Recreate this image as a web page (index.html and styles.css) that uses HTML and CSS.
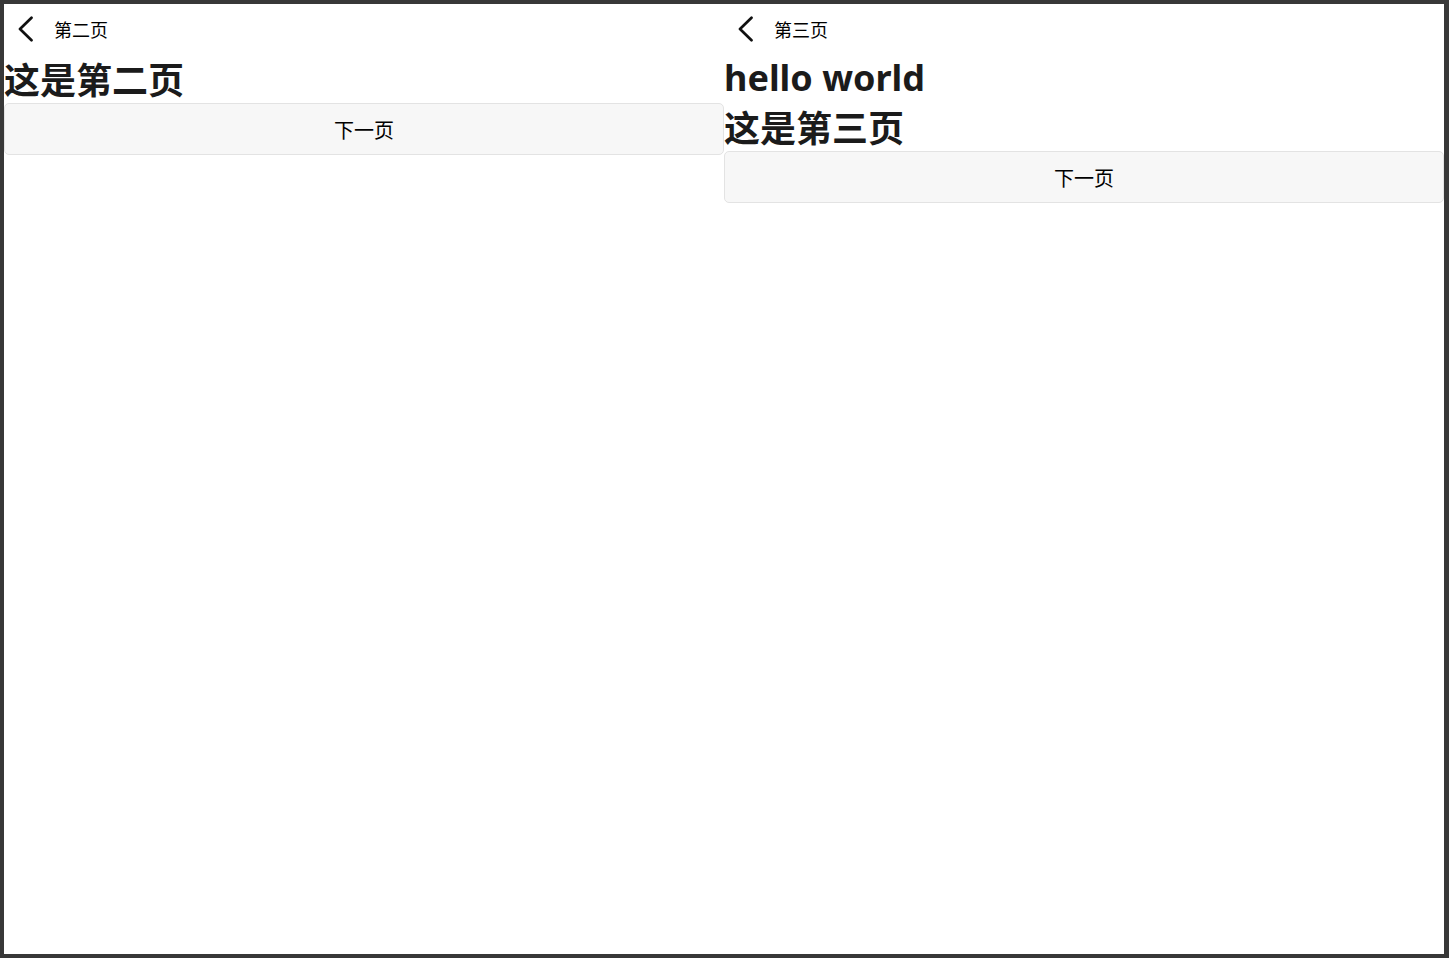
FILE: index.html
```html
<!DOCTYPE html>
<html lang="zh">
<head>
<meta charset="utf-8">
<title>页面</title>
<link rel="stylesheet" href="styles.css">
</head>
<body>
<div class="frame">
  <section class="page">
    <header class="nav">
      <span class="back"><svg width="18" height="26" viewBox="0 0 18 26"><path d="M15.5 1.8 L4 13 L15.5 24.2" fill="none" stroke="#111" stroke-width="2.7" stroke-linecap="round" stroke-linejoin="round"/></svg></span>
      <span class="title">第二页</span>
    </header>
    <h1 class="heading">这是第二页</h1>
    <button class="next">下一页</button>
  </section>
  <section class="page">
    <header class="nav">
      <span class="back"><svg width="18" height="26" viewBox="0 0 18 26"><path d="M15.5 1.8 L4 13 L15.5 24.2" fill="none" stroke="#111" stroke-width="2.7" stroke-linecap="round" stroke-linejoin="round"/></svg></span>
      <span class="title">第三页</span>
    </header>
    <h1 class="heading latin">hello world</h1>
    <h1 class="heading">这是第三页</h1>
    <button class="next">下一页</button>
  </section>
</div>
</body>
</html>
```
FILE: styles.css
```css
html, body {
  margin: 0;
  padding: 0;
  height: 100%;
}
body {
  background: #3a3a3a;
  font-family: "Noto Sans", "Noto Sans CJK SC", sans-serif;
}
.frame {
  box-sizing: border-box;
  height: 958px;
  width: 1449px;
  border-style: solid;
  border-color: #383838;
  border-width: 4px 5px 4px 4px;
  background: #fff;
  display: grid;
  grid-template-columns: 720px 720px;
  align-items: start;
}
.page {
  display: flex;
  flex-direction: column;
}
.nav {
  box-sizing: border-box;
  height: 51px;
  display: flex;
  align-items: center;
  padding-left: 12px;
  padding-bottom: 2px;
}
.back {
  display: flex;
  width: 18px;
  height: 26px;
}
.title {
  margin-left: 20px;
  font-size: 18px;
  color: #000;
  font-family: "Noto Sans CJK SC", sans-serif;
}
.heading {
  margin: 0;
  font-size: 36px;
  line-height: 46px;
  padding-bottom: 2px;
  font-weight: 700;
  color: #1b1b1b;
  font-family: "Noto Sans CJK SC", sans-serif;
}
.heading.latin {
  font-family: "Noto Sans", "Noto Sans CJK SC", sans-serif;
}
.next {
  box-sizing: border-box;
  height: 52px;
  width: 100%;
  margin: 0;
  background: #f7f7f7;
  border: 1px solid #e3e3e3;
  border-radius: 5px;
  font-size: 20px;
  color: #000;
  font-family: "Noto Sans CJK SC", sans-serif;
  padding: 0;
}
```
